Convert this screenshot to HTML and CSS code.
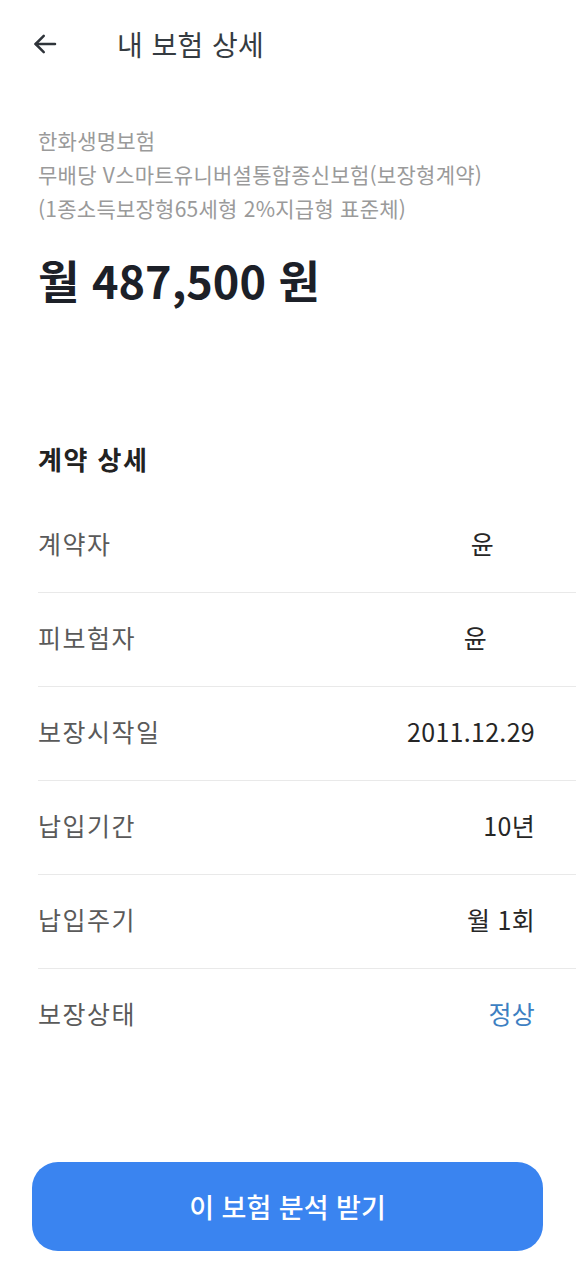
FILE: index.html
```html
<!DOCTYPE html>
<html lang="ko">
<head>
<meta charset="utf-8">
<title>내 보험 상세</title>
<link rel="stylesheet" href="styles.css">
</head>
<body>
<div class="page">
  <header class="header">
    <button class="back" aria-label="뒤로">
      <svg width="30" height="30" viewBox="0 0 24 24" fill="none" stroke="#2f343a" stroke-width="2" stroke-linecap="round" stroke-linejoin="round"><path d="M20 12H4.5"/><path d="M11 5.5 4.5 12l6.5 6.5"/></svg>
    </button>
    <h1 class="title">내 보험 상세</h1>
  </header>

  <section class="summary">
    <p class="product">한화생명보험<br>무배당 V스마트유니버셜통합종신보험(보장형계약)<br>(1종소득보장형65세형 2%지급형 표준체)</p>
    <p class="price">월 487,500 원</p>
  </section>

  <section class="details">
    <h2 class="details-title">계약 상세</h2>
    <ul class="rows">
      <li class="row"><span class="label">계약자</span><span class="value value-name1">윤</span></li>
      <li class="row"><span class="label">피보험자</span><span class="value value-name2">윤</span></li>
      <li class="row"><span class="label">보장시작일</span><span class="value">2011.12.29</span></li>
      <li class="row"><span class="label">납입기간</span><span class="value">10년</span></li>
      <li class="row"><span class="label">납입주기</span><span class="value">월 1회</span></li>
      <li class="row"><span class="label">보장상태</span><span class="value value-ok">정상</span></li>
    </ul>
  </section>

  <div class="cta-wrap">
    <button class="cta">이 보험 분석 받기</button>
  </div>
</div>
</body>
</html>
```
FILE: styles.css
```css
* { box-sizing: border-box; }
html, body { margin: 0; padding: 0; background: #fff; }
body {
  font-family: "Noto Sans CJK KR", "Noto Sans", sans-serif;
  color: #222;
}
.page {
  width: 576px;
  min-height: 1280px;
  display: flex;
  flex-direction: column;
}
.header {
  height: 88px;
  display: flex;
  align-items: center;
  padding-left: 30px;
}
.back {
  width: 30px;
  height: 30px;
  padding: 0;
  border: 0;
  background: none;
  display: flex;
}
.title {
  margin: 0 0 0 57px;
  font-size: 28px;
  font-weight: 400;
  color: #353b41;
  line-height: 40px;
  letter-spacing: 0.4px;
}
.summary {
  padding: 35px 0 0 38px;
}
.product {
  margin: 0;
  font-size: 21px;
  line-height: 34px;
  color: #9a9a9a;
  letter-spacing: 0.25px;
}
.price {
  margin: 25px 0 0;
  font-size: 45px;
  line-height: 60px;
  font-weight: 700;
  color: #1c2028;
}
.details {
  margin-top: 131px;
  padding-left: 38px;
}
.details-title {
  margin: 0;
  font-size: 26px;
  line-height: 36px;
  font-weight: 700;
  color: #222;
  letter-spacing: 1.5px;
}
.rows {
  list-style: none;
  margin: 22px 0 0;
  padding: 0;
}
.row {
  height: 94px;
  display: flex;
  align-items: center;
  justify-content: space-between;
  padding: 0 41px 6px 0;
  border-bottom: 1px solid #e9e9e9;
}
.row:last-child { border-bottom: 0; }
.label {
  font-size: 25px;
  color: #5a5a5a;
  letter-spacing: 1.5px;
}
.value {
  font-size: 25px;
  color: #262626;
  letter-spacing: 0.3px;
}
.value-name1 { margin-right: 41px; }
.value-name2 { margin-right: 48px; }
.value-ok { color: #3d7fc2; }
.cta-wrap {
  margin-top: auto;
  padding: 0 33px 29px 32px;
}
.cta {
  width: 100%;
  height: 89px;
  border: 0;
  border-radius: 26px;
  background: #3a84f0;
  color: #fff;
  font-family: inherit;
  font-size: 27px;
  font-weight: 500;
}
```
